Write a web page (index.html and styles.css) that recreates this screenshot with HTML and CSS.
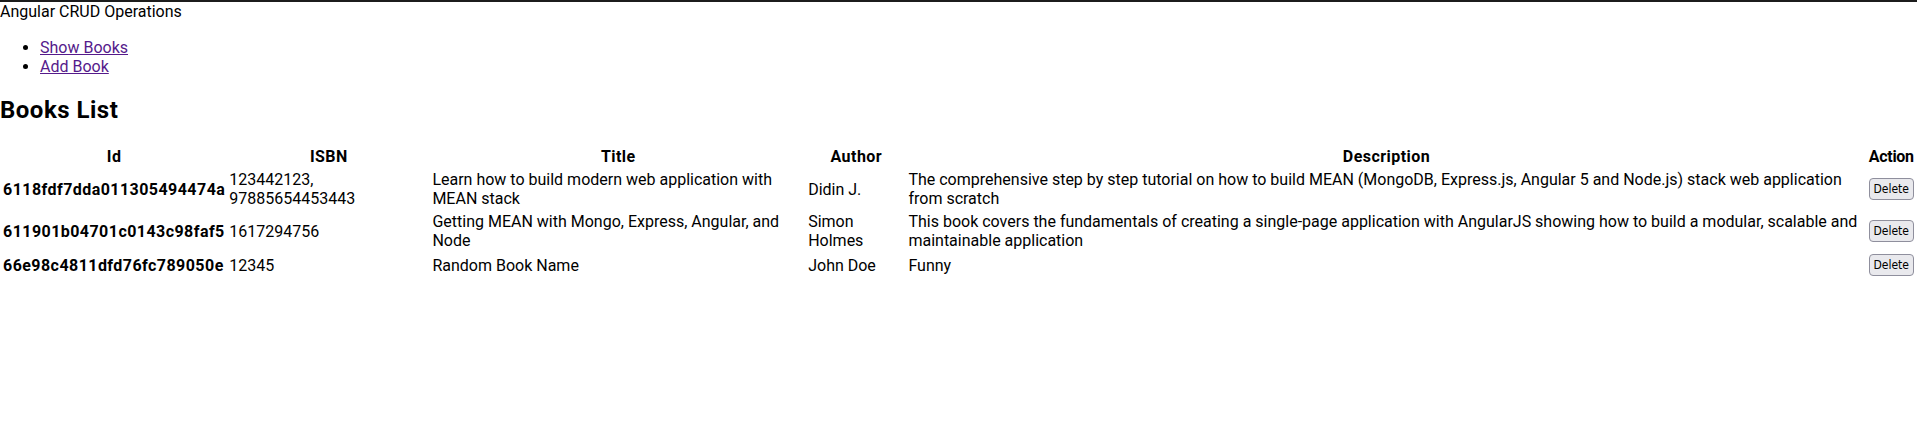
FILE: index.html
```html
<!DOCTYPE html>
<html>
<head>
<meta charset="utf-8">
<title>Angular CRUD</title>
<link rel="stylesheet" href="styles.css">
</head>
<body>
<div class="app">
  <div class="brand">Angular CRUD Operations</div>
  <ul class="nav">
    <li><a href="#">Show Books</a></li>
    <li><a href="#">Add Book</a></li>
  </ul>
  <h2 class="heading">Books List</h2>
  <table class="books">
    <thead>
      <tr>
        <th>Id</th>
        <th>ISBN</th>
        <th>Title</th>
        <th>Author</th>
        <th>Description</th>
        <th class="action">Action</th>
      </tr>
    </thead>
    <tbody>
      <tr>
        <td class="id">6118fdf7dda011305494474a</td>
        <td>123442123, 97885654453443</td>
        <td>Learn how to build modern web application with MEAN stack</td>
        <td>Didin J.</td>
        <td>The comprehensive step by step tutorial on how to build MEAN (MongoDB, Express.js, Angular 5 and Node.js) stack web application from scratch</td>
        <td><button class="del">Delete</button></td>
      </tr>
      <tr>
        <td class="id">611901b04701c0143c98faf5</td>
        <td>1617294756</td>
        <td>Getting MEAN with Mongo, Express, Angular, and Node</td>
        <td>Simon Holmes</td>
        <td>This book covers the fundamentals of creating a single-page application with AngularJS showing how to build a modular, scalable and maintainable application</td>
        <td><button class="del">Delete</button></td>
      </tr>
      <tr>
        <td class="id">66e98c4811dfd76fc789050e</td>
        <td>12345</td>
        <td>Random Book Name</td>
        <td>John Doe</td>
        <td>Funny</td>
        <td><button class="del">Delete</button></td>
      </tr>
    </tbody>
  </table>
</div>
</body>
</html>
```
FILE: styles.css
```css
html, body {
  margin: 0;
  padding: 0;
  background: #fff;
}
body {
  font-family: Roboto, "Liberation Sans", sans-serif;
  font-size: 16px;
  color: #000;
  border-top: 2px solid #1c1c1c;
}
.brand {
  line-height: 20px;
}
.nav {
  margin: 16px 0;
  padding-left: 40px;
}
.nav a {
  color: #551a8b;
}
.heading {
  font-size: 24px;
  font-weight: bold;
  letter-spacing: 0.5px;
  margin: 20px 0;
}
.books {
  border-spacing: 2px;
}
.books th {
  font-weight: bold;
  letter-spacing: 0.45px;
  text-align: center;
  padding: 1px;
}
.books th.action {
  letter-spacing: -0.3px;
}
.books td {
  padding: 1px;
  vertical-align: middle;
}
.books td.id {
  font-weight: bold;
  letter-spacing: 0.45px;
}
.del {
  font-family: "DejaVu Sans Condensed", "DejaVu Sans", sans-serif;
  font-stretch: condensed;
  font-size: 12px;
  line-height: 14px;
  color: #000;
  background: #e9e9ed;
  border: 1px solid #8f8f9d;
  border-radius: 4px;
  padding: 3px 4px;
}
```
